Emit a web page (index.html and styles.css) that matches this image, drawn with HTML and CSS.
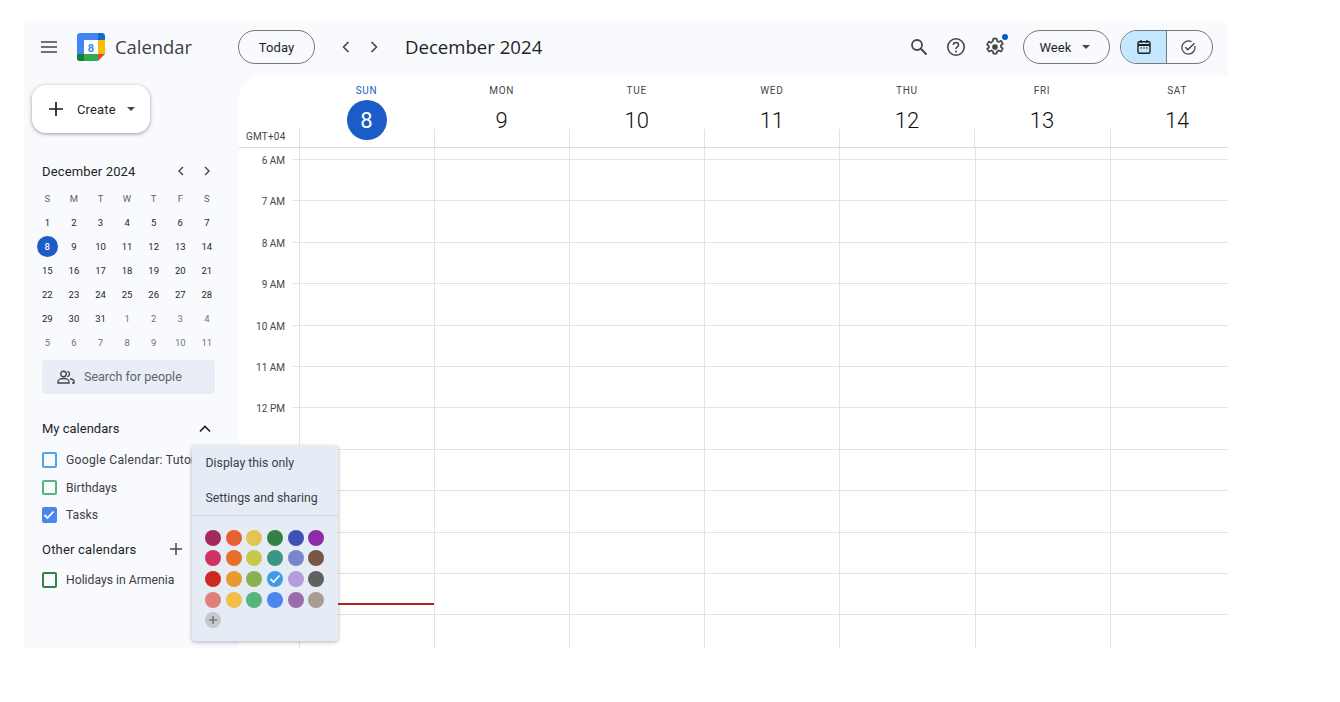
FILE: index.html
```html
<!DOCTYPE html>
<html lang="en">
<head>
<meta charset="utf-8">
<title>Calendar</title>
<link rel="stylesheet" href="styles.css">
</head>
<body>
<div class="app">
  <header class="topbar">
    <div class="brand">
      <svg class="menu-icon" width="18" height="12" viewBox="0 0 18 12"><path d="M1 1h16M1 6h16M1 11h16" stroke="#444746" stroke-width="1.6" fill="none"/></svg>
      <svg class="logo" width="28" height="28" viewBox="0 0 28 28">
        <path d="M7 7h14v14H7z" fill="#fff"/>
        <path d="M2 0h19v7H7v14H0V2a2 2 0 0 1 2-2z" fill="#4285f4"/>
        <path d="M21 0h5a2 2 0 0 1 2 2v5h-7z" fill="#1967d2"/>
        <path d="M21 7h7v14h-7z" fill="#fbbc04"/>
        <path d="M0 21h21v7H2a2 2 0 0 1-2-2z" fill="#34a853"/>
        <path d="M0 21h7v7H2a2 2 0 0 1-2-2z" fill="#188038"/>
        <path d="M21 21h7l-7 7z" fill="#ea4335"/>
        <text x="14" y="18.5" class="logo-num">8</text>
      </svg>
      <span class="brand-name">Calendar</span>
    </div>
    <button class="pill today">Today</button>
    <div class="nav-arrows">
      <svg width="10" height="12" viewBox="0 0 10 12"><path d="M7.5 1 2.500 6l5 5" stroke="#444746" stroke-width="1.6" fill="none"/></svg>
      <svg width="10" height="12" viewBox="0 0 10 12"><path d="m2.500 1 5 5-5 5" stroke="#444746" stroke-width="1.6" fill="none"/></svg>
    </div>
    <h1 class="period">December 2024</h1>
    <div class="tools">
      <svg class="search-icon" width="18" height="18" viewBox="0 0 18 18"><circle cx="7" cy="7" r="5" stroke="#444746" stroke-width="1.8" fill="none"/><path d="m10.800 10.800 5.700 5.700" stroke="#444746" stroke-width="2" fill="none"/></svg>
      <svg width="20" height="20" viewBox="0 0 20 20"><circle cx="10" cy="10" r="8.200" stroke="#444746" stroke-width="1.6" fill="none"/><path d="M7.400 8a2.600 2.600 0 0 1 5.200 0c0 1.900-2.600 2-2.600 4" stroke="#444746" stroke-width="1.500" fill="none"/><circle cx="10" cy="14.400" r="1" fill="#444746"/></svg>
      <span class="gear">
        <svg width="20" height="20" viewBox="0 0 24 24"><path d="M10 2h4l.6 3 1.900.9 2.700-1.400 2.200 3.600-2.300 1.900v2l2.300 1.900-2.200 3.600-2.700-1.400-1.900.9-.6 3h-4l-.6-3-1.900-.9-2.700 1.400-2.200-3.600L4.700 13v-2L2.400 9.100l2.200-3.600 2.700 1.400L9.400 5z" stroke="#444746" stroke-width="2" stroke-linejoin="round" fill="none"/><circle cx="12" cy="12" r="3.400" fill="#444746"/></svg>
        <span class="gear-dot"></span>
      </span>
    </div>
    <button class="pill week">Week<span class="caret"></span></button>
    <div class="toggle">
      <span class="toggle-cell on">
        <svg width="16" height="16" viewBox="0 0 16 16"><rect x="2" y="2.800" width="12" height="11.500" rx="1.200" stroke="#1f1f1f" stroke-width="1.400" fill="none"/><path d="M2 6h12" stroke="#1f1f1f" stroke-width="1.800"/><path d="M5 1v3M11 1v3" stroke="#1f1f1f" stroke-width="1.400"/><path d="M4.500 9h1.500M7.300 9h1.500M10 9h1.500" stroke="#1f1f1f" stroke-width="1.200"/></svg>
      </span>
      <span class="toggle-cell second">
        <svg width="17" height="17" viewBox="0 0 17 17"><path d="M14.800 6.800A6.600 6.600 0 1 1 11.500 2.700" stroke="#444746" stroke-width="1.300" fill="none"/><path d="m5.300 8.300 2.500 2.500 6.600-6.600" stroke="#444746" stroke-width="1.400" fill="none"/></svg>
      </span>
    </div>
  </header>

  <div class="body">
    <aside class="sidebar">
      <button class="create">
        <svg width="16" height="16" viewBox="0 0 16 16"><path d="M8 1v14M1 8h14" stroke="#1f1f1f" stroke-width="1.700"/></svg>
        <span class="create-label">Create</span>
        <span class="caret"></span>
      </button>

      <div class="mini-head">
        <span class="mini-title">December 2024</span>
        <span class="mini-nav">
          <svg width="8" height="10" viewBox="0 0 8 10"><path d="M6 1 2 5l4 4" stroke="#444746" stroke-width="1.400" fill="none"/></svg>
          <svg width="8" height="10" viewBox="0 0 8 10"><path d="m2 1 4 4-4 4" stroke="#444746" stroke-width="1.400" fill="none"/></svg>
        </span>
      </div>
      <div class="mini-grid">
        <span class="dow">S</span><span class="dow">M</span><span class="dow">T</span><span class="dow">W</span><span class="dow">T</span><span class="dow">F</span><span class="dow">S</span>
        <span>1</span><span>2</span><span>3</span><span>4</span><span>5</span><span>6</span><span>7</span>
        <span><b class="mini-today">8</b></span><span>9</span><span>10</span><span>11</span><span>12</span><span>13</span><span>14</span>
        <span>15</span><span>16</span><span>17</span><span>18</span><span>19</span><span>20</span><span>21</span>
        <span>22</span><span>23</span><span>24</span><span>25</span><span>26</span><span>27</span><span>28</span>
        <span>29</span><span>30</span><span>31</span><span class="dim">1</span><span class="dim">2</span><span class="dim">3</span><span class="dim">4</span>
        <span class="dim">5</span><span class="dim">6</span><span class="dim">7</span><span class="dim">8</span><span class="dim">9</span><span class="dim">10</span><span class="dim">11</span>
      </div>

      <div class="people">
        <svg width="18" height="14" viewBox="0 0 18 14"><circle cx="6.500" cy="4" r="2.800" stroke="#444746" stroke-width="1.400" fill="none"/><path d="M1 13v-1.500c0-1.800 2.800-3 5.500-3s5.500 1.200 5.500 3V13z" stroke="#444746" stroke-width="1.400" fill="none"/><path d="M10.500 1.300a2.800 2.800 0 0 1 0 5.400M13 8.800c2 .4 4 1.300 4 2.800V13h-2" stroke="#444746" stroke-width="1.400" fill="none"/></svg>
        <span>Search for people</span>
      </div>

      <div class="section-head first">
        <span>My calendars</span>
        <svg width="12" height="8" viewBox="0 0 12 8"><path d="m1 6.500 5-5 5 5" stroke="#1f1f1f" stroke-width="1.600" fill="none"/></svg>
      </div>
      <ul class="cal-list">
        <li><span class="check c-blue"></span><span class="cal-name wide">Google Calendar: Tutorial</span></li>
        <li><span class="check c-green"></span><span class="cal-name">Birthdays</span></li>
        <li><span class="check c-tasks"><svg width="12" height="10" viewBox="0 0 12 10"><path d="m1.500 5 3 3 6-6.500" stroke="#fff" stroke-width="1.800" fill="none"/></svg></span><span class="cal-name">Tasks</span></li>
      </ul>
      <div class="section-head other">
        <span>Other calendars</span>
        <svg class="other-plus" width="14" height="14" viewBox="0 0 14 14"><path d="M7 1v12M1 7h12" stroke="#444746" stroke-width="1.500"/></svg>
      </div>
      <ul class="cal-list">
        <li><span class="check c-dark"></span><span class="cal-name">Holidays in Armenia</span></li>
      </ul>
    </aside>

    <main class="week-view">
      <div class="week-head">
        <div class="gmt">GMT+04</div>
        <div class="day today-col"><span class="dname">SUN</span><span class="dnum">8</span></div>
        <div class="day"><span class="dname">MON</span><span class="dnum">9</span></div>
        <div class="day"><span class="dname">TUE</span><span class="dnum">10</span></div>
        <div class="day"><span class="dname">WED</span><span class="dnum">11</span></div>
        <div class="day"><span class="dname">THU</span><span class="dnum">12</span></div>
        <div class="day"><span class="dname">FRI</span><span class="dnum">13</span></div>
        <div class="day"><span class="dname">SAT</span><span class="dnum">14</span></div>
      </div>
      <div class="hours">
        <div class="hour"><span class="hlabel">6 AM</span></div>
        <div class="hour"><span class="hlabel">7 AM</span></div>
        <div class="hour"><span class="hlabel">8 AM</span></div>
        <div class="hour"><span class="hlabel">9 AM</span></div>
        <div class="hour"><span class="hlabel">10 AM</span></div>
        <div class="hour"><span class="hlabel">11 AM</span></div>
        <div class="hour"><span class="hlabel">12 PM</span></div>
        <div class="hour"></div>
        <div class="hour"></div>
        <div class="hour"></div>
        <div class="hour"></div>
        <div class="hour"></div>
      </div>
      <div class="now-line"></div>
    </main>

    <div class="popup">
      <div class="popup-item">Display this only</div>
      <div class="popup-item">Settings and sharing</div>
      <div class="swatches">
        <span class="sw s1"></span><span class="sw s2"></span><span class="sw s3"></span><span class="sw s4"></span><span class="sw s5"></span><span class="sw s6"></span>
        <span class="sw s7"></span><span class="sw s8"></span><span class="sw s9"></span><span class="sw s10"></span><span class="sw s11"></span><span class="sw s12"></span>
        <span class="sw s13"></span><span class="sw s14"></span><span class="sw s15"></span><span class="sw s16"><svg width="12" height="10" viewBox="0 0 12 10"><path d="m1.500 5 3 3 6-6.500" stroke="#fff" stroke-width="1.700" fill="none"/></svg></span><span class="sw s17"></span><span class="sw s18"></span>
        <span class="sw s19"></span><span class="sw s20"></span><span class="sw s21"></span><span class="sw s22"></span><span class="sw s23"></span><span class="sw s24"></span>
        <span class="sw s25"><svg width="10" height="10" viewBox="0 0 10 10"><path d="M5 1v8M1 5h8" stroke="#5f6368" stroke-width="1.200"/></svg></span>
      </div>
    </div>
  </div>
</div>
</body>
</html>
```
FILE: styles.css
```css
* { box-sizing: border-box; }
html, body { margin: 0; height: 100%; background: #fff; overflow: hidden; }
body { font-family: Roboto, "Liberation Sans", sans-serif; color: #1f1f1f; padding: 23px 0 0 24px; }
ul { list-style: none; margin: 0; padding: 0; }
svg { display: block; flex: none; }

.app { width: 1204px; height: 625px; background: #f8fafd; display: flex; flex-direction: column; overflow: hidden; }

/* top bar */
.topbar { height: 48px; margin-bottom: 4px; flex: none; display: flex; align-items: center; }
.brand { width: 214px; flex: none; display: flex; align-items: center; padding-left: 16px; }
.menu-icon { margin-right: 19px; }
.logo { margin-right: 10px; border-radius: 3px; }
.logo-num { font: 700 11px Roboto, sans-serif; fill: #4285f4; text-anchor: middle; }
.brand-name { font-family: "Open Sans", sans-serif; font-size: 18.400px; color: #3c4043; padding-bottom: 2px; }
.pill { height: 34px; border: 1px solid #747775; border-radius: 17px; background: transparent; font: 400 13px Roboto, sans-serif; letter-spacing: .1px; color: #1f1f1f; display: flex; align-items: center; justify-content: center; padding: 0; }
.today { width: 77px; }
.nav-arrows { display: flex; gap: 18px; margin-left: 26px; }
.period { font-family: "Open Sans", sans-serif; font-weight: 400; font-size: 18.600px; margin: 0 0 2px 26px; color: #1f1f1f; white-space: nowrap; }
.tools { margin-left: auto; display: flex; align-items: center; gap: 19px; }
.search-icon { margin-right: -1px; }
.gear { display: block; position: relative; }
.gear-dot { position: absolute; right: -3px; top: -3px; width: 6px; height: 6px; border-radius: 50%; background: #0b57d0; }
.week { width: 87px; margin-left: 18px; gap: 10px; padding-right: 4px; }
.caret { width: 0; height: 0; border-left: 4px solid transparent; border-right: 4px solid transparent; border-top: 4px solid #444746; }
.toggle { width: 93px; height: 34px; margin: 0 15px 0 10px; border: 1px solid #747775; border-radius: 17px; display: flex; overflow: hidden; }
.toggle-cell { display: flex; align-items: center; justify-content: center; }
.toggle-cell.on { width: 46px; flex: none; background: #c2e7ff; border-right: 1px solid #747775; }
.toggle-cell.second { flex: 1; padding-right: 2px; }

.body { flex: 1; min-height: 0; display: flex; position: relative; }

/* sidebar */
.sidebar { width: 215px; flex: none; }
.create { width: 118px; height: 48px; margin: 10px 0 0 8px; border: 0; border-radius: 14px; background: #fff; box-shadow: 0 1px 3px rgba(60,64,67,.35), 0 1px 4px 1px rgba(60,64,67,.15); display: flex; align-items: center; padding: 0 0 0 16px; font: 400 13px Roboto, sans-serif; letter-spacing: .15px; color: #1f1f1f; }
.create-label { margin-left: 13px; margin-right: 11px; }
.mini-head { display: flex; align-items: center; justify-content: space-between; margin: 29px 24px 0 18px; height: 18px; }
.mini-title { font-size: 13px; letter-spacing: .15px; }
.mini-nav { display: flex; gap: 18px; margin-right: 4px; }
.mini-grid { display: grid; grid-template-columns: repeat(7, 26.600px); grid-auto-rows: 24.100px; margin: 6px 0 0 10px; font-size: 9.500px; }
.mini-grid > span { display: flex; align-items: center; justify-content: center; }
.mini-grid .dow { color: #5f6368; }
.mini-grid .dim { color: #70757a; }
.mini-today { width: 21px; height: 21px; border-radius: 50%; background: #1c5cc8; color: #fff; display: flex; align-items: center; justify-content: center; font-weight: 500; }
.people { width: 173px; height: 34px; margin: 5px 0 0 18px; background: #e9eef6; border-radius: 4px; display: flex; align-items: center; gap: 9px; padding-left: 15px; font-size: 12.500px; color: #5f6368; }
.section-head { display: flex; align-items: center; justify-content: space-between; margin-left: 18px; font-size: 13px; height: 18px; }
.section-head.first { margin-top: 26px; margin-right: 28px; }
.section-head.other { margin-top: 11.500px; margin-right: 56px; letter-spacing: .2px; }
.cal-list { margin-top: 8px; }
.section-head.first + .cal-list { margin-top: 8.500px; }
.cal-list li { height: 27.600px; display: flex; align-items: center; padding-left: 17.500px; font-size: 12.200px; color: #3c4043; white-space: nowrap; overflow: hidden; }
.wide { letter-spacing: .25px; }
.check { width: 15.500px; height: 15.500px; border-radius: 2px; border: 2px solid; flex: none; margin-right: 9px; display: flex; align-items: center; justify-content: center; }
.c-blue { border-color: #4ba4e8; }
.c-green { border-color: #57b37c; }
.c-tasks { border-color: #4b85ee; background: #4b85ee; }
.c-dark { border-color: #358045; }

/* week view */
.week-view { flex: 1; min-width: 0; background: #fff; border-top-left-radius: 24px; overflow: hidden; position: relative; }
.week-head { height: 73px; display: flex; border-bottom: 1.500px solid #dadce0; }
.gmt { width: 60px; flex: none; font-size: 10px; color: #444746; align-self: flex-end; padding: 0 0 5px 7px; letter-spacing: .2px; }
.day { width: 135.100px; flex: none; display: flex; flex-direction: column; align-items: center; padding-top: 10px; background: linear-gradient(#e0e3e8, #e0e3e8) left bottom / 1px 18px no-repeat; }
.dname { font-size: 10px; letter-spacing: .7px; color: #444746; line-height: 12px; }
.dnum { font-size: 22px; font-weight: 300; color: #111; line-height: 41px; margin-top: 3px; width: 40px; height: 40px; border-radius: 50%; text-align: center; }
.today-col .dname { color: #1c5cc8; }
.today-col .dnum { background: #1c5cc8; color: #fff; font-weight: 400; }

.hours { height: 500px; background: repeating-linear-gradient(90deg, #e0e3e8 0 1px, transparent 1px 135.100px) 60px 0 no-repeat; }
.hour { height: 41.400px; display: flex; }
.hour::after { content: ""; flex: 1; margin-left: 1px; height: 1px; background: #e0e3e8; margin-top: 11.100px; }
.hlabel { width: 46px; flex: none; margin-right: 7px; font-size: 10px; text-align: right; color: #444746; line-height: 25px; height: 25px; }
.now-line { position: absolute; left: 60px; top: 528px; width: 135px; height: 2px; background: #b3261e; }

/* popup */
.popup { position: absolute; left: 168px; top: 371px; width: 146px; height: 195px; background: #e6ecf6; border-radius: 3px; box-shadow: 0 1px 4px rgba(60,64,67,.4); z-index: 2; font-size: 12.300px; color: #3c4043; }
.popup-item { height: 34.500px; display: flex; align-items: center; padding-left: 13.500px; }
.swatches { border-top: 1px solid #d3d8e0; padding: 13.500px 0 0 13px; display: grid; grid-template-columns: repeat(6, 20.700px); grid-auto-rows: 20.700px; }
.sw { width: 16px; height: 16px; border-radius: 50%; display: flex; align-items: center; justify-content: center; }
.s1 { background: #a52a5c; } .s2 { background: #e8602f; } .s3 { background: #e5c452; } .s4 { background: #358045; } .s5 { background: #3f51b5; } .s6 { background: #8e2ba8; }
.s7 { background: #cf3364; } .s8 { background: #e6702a; } .s9 { background: #c5c84a; } .s10 { background: #3b9583; } .s11 { background: #7986cb; } .s12 { background: #795548; }
.s13 { background: #cc2a1c; } .s14 { background: #e8992f; } .s15 { background: #8ab050; } .s16 { background: #3e9be6; } .s17 { background: #b39ddb; } .s18 { background: #616161; }
.s19 { background: #e08078; } .s20 { background: #f0bf48; } .s21 { background: #57b37c; } .s22 { background: #4b85ee; } .s23 { background: #9b6baa; } .s24 { background: #a89d90; }
.s25 { background: #c6c9c9; }
```
